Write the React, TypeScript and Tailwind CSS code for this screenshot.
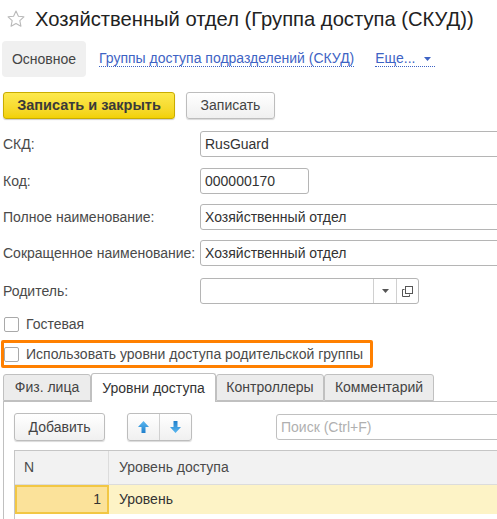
import React from 'react'

const font = { fontFamily: '"Liberation Sans", Arial, sans-serif' }

function Star() {
  return (
    <svg width="20" height="20" viewBox="0 0 24 24" className="shrink-0">
      <path
        d="M12 2.5l2.9 6.1 6.6.8-4.9 4.6 1.3 6.6L12 17.3l-5.9 3.3 1.3-6.6-4.9-4.6 6.6-.8z"
        fill="none"
        stroke="#b9b9b9"
        strokeWidth="1.3"
        strokeLinejoin="round"
      />
    </svg>
  )
}

function Arrow({ up }: { up?: boolean }) {
  return (
    <svg width="11" height="12" viewBox="0 0 11 12" className={up ? '' : 'rotate-180'}>
      <defs>
        <linearGradient id={up ? 'ga' : 'gb'} x1="0" y1="0" x2="0" y2="1">
          <stop offset="0" stopColor="#5cb8f0" />
          <stop offset="1" stopColor="#1f7fcc" />
        </linearGradient>
      </defs>
      <polygon points="5.5,0 11,6 7.5,6 7.5,12 3.5,12 3.5,6 0,6" fill={`url(#${up ? 'ga' : 'gb'})`} />
    </svg>
  )
}

function Tri({ color = '#555' }: { color?: string }) {
  return (
    <svg width="7" height="4" viewBox="0 0 7 4">
      <polygon points="0,0 7,0 3.5,4" fill={color} />
    </svg>
  )
}

function Field({ label, value, width, mt }: { label: string; value?: string; width: string; mt: string }) {
  return (
    <div className={`flex items-center h-[26px] ${mt}`}>
      <span className="w-[200px] pl-[3px] text-[14px] text-[#4a4a4a] shrink-0">{label}</span>
      <div className={`${width} h-full border border-[#b5b5b5] rounded-[3px] bg-white flex items-center px-[4px] text-[14px] text-[#333] shrink-0`}>
        {value}
      </div>
    </div>
  )
}

function Checkbox() {
  return <span className="w-[15px] h-[15px] border border-[#a9a9a9] rounded-[2px] bg-white shrink-0" />
}

function Tab({ label, active, w }: { label: string; active?: boolean; w: string }) {
  return active ? (
    <div className={`${w} h-[29px] -mb-px border border-[#c0c0c0] border-b-0 rounded-t-[3px] bg-white flex items-center justify-center text-[14px] text-[#333] z-10`}>
      {label}
    </div>
  ) : (
    <div className={`${w} h-[27px] border border-[#c0c0c0] rounded-t-[3px] bg-[#ececec] flex items-center justify-center text-[14px] text-[#444]`}>
      {label}
    </div>
  )
}

export default function App() {
  return (
    <div className="w-[497px] h-[519px] overflow-hidden bg-white" style={font}>
      {/* title */}
      <div className="flex items-center h-[38px] pl-[6px] gap-[9px]">
        <Star />
        <span className="text-[20.2px] text-[#222] leading-none pt-[1px]">Хозяйственный отдел (Группа доступа (СКУД))</span>
      </div>

      {/* nav */}
      <div className="flex items-center h-[36px] mt-[3px] pl-[2px] text-[14px]">
        <div className="h-full w-[84px] rounded-[4px] bg-[#f0f0f0] flex items-center justify-center text-[#444]">Основное</div>
        <span className="ml-[13px] text-[#3e63c4] border-b border-dotted border-[#3e63c4] leading-[15px]">
          Группы доступа подразделений (СКУД)
        </span>
        <span className="ml-[21px] flex items-center gap-[9px] pr-[4px] text-[#3e63c4] border-b border-dotted border-[#3e63c4] leading-[15px]">
          Еще...
          <Tri color="#3e63c4" />
        </span>
      </div>

      {/* buttons */}
      <div className="flex items-center mt-[15px] pl-[3px] gap-[11px] h-[27px]">
        <button className="h-full w-[172px] rounded-[3px] border border-[#c9ac00] bg-gradient-to-b from-[#fde94c] to-[#f2d100] text-[14.5px] font-bold text-[#3a3a3a] shadow-[0_1px_1px_rgba(0,0,0,0.2)]">
          Записать и закрыть
        </button>
        <button className="h-full w-[89px] rounded-[3px] border border-[#bdbdbd] bg-gradient-to-b from-white to-[#f0f0f0] text-[14px] text-[#444] shadow-[0_1px_1px_rgba(0,0,0,0.15)]">
          Записать
        </button>
      </div>

      {/* fields */}
      <Field label="СКД:" value="RusGuard" width="w-[310px]" mt="mt-[12px]" />
      <Field label="Код:" value="000000170" width="w-[109px]" mt="mt-[11px]" />
      <Field label="Полное наименование:" value="Хозяйственный отдел" width="w-[310px]" mt="mt-[10px]" />
      <Field label="Сокращенное наименование:" value="Хозяйственный отдел" width="w-[310px]" mt="mt-[10px]" />
      <div className="flex items-center h-[26px] mt-[12px]">
        <span className="w-[200px] pl-[3px] text-[14px] text-[#4a4a4a] shrink-0">Родитель:</span>
        <div className="w-[219px] h-full border border-[#b5b5b5] rounded-[3px] bg-white flex shrink-0">
          <div className="flex-1" />
          <div className="w-[23px] border-l border-[#d0d0d0] flex items-center justify-center">
            <Tri color="#555" />
          </div>
          <div className="w-[22px] border-l border-[#d0d0d0] flex items-center justify-center">
            <svg width="11" height="11" viewBox="0 0 11 11">
              <rect x="3.5" y="0.5" width="7" height="7" fill="white" stroke="#555" />
              <path d="M2.5 3.5H0.5V10.5H7.5V8.5" fill="none" stroke="#555" />
            </svg>
          </div>
        </div>
      </div>

      {/* checkboxes */}
      <div className="flex items-center gap-[7px] pl-[4px] h-[16px] mt-[12px] text-[14px] text-[#4a4a4a]">
        <Checkbox />
        Гостевая
      </div>
      <div className="ml-[1px] mt-[8px] w-[372px] h-[28px] border-[3px] border-[#ff8000] rounded-[2px] flex items-center gap-[7px] pl-[0px] text-[14px] text-[#4a4a4a]">
        <Checkbox />
        Использовать уровни доступа родительской группы
      </div>

      {/* tabs */}
      <div className="mt-[5px] flex items-end pl-[3px]">
        <Tab label="Физ. лица" w="w-[88px]" />
        <Tab label="Уровни доступа" active w="w-[125px]" />
        <Tab label="Контроллеры" w="w-[108px]" />
        <Tab label="Комментарий" w="w-[110px]" />
      </div>
      <div className="ml-[3px] w-[520px] h-[200px] border border-[#c0c0c0] bg-white pl-[10px] pt-[11px]">
        <div className="flex items-center h-[28px]">
          <button className="h-full w-[91px] rounded-[3px] border border-[#bdbdbd] bg-gradient-to-b from-white to-[#f0f0f0] text-[14px] text-[#444] shadow-[0_1px_1px_rgba(0,0,0,0.15)]">
            Добавить
          </button>
          <div className="ml-[22px] h-full w-[65px] rounded-[3px] border border-[#bdbdbd] bg-gradient-to-b from-white to-[#f0f0f0] flex shadow-[0_1px_1px_rgba(0,0,0,0.15)]">
            <div className="flex-1 flex items-center justify-center border-r border-[#d0d0d0]">
              <Arrow up />
            </div>
            <div className="flex-1 flex items-center justify-center">
              <Arrow />
            </div>
          </div>
          <div className="ml-[84px] h-[26px] w-[240px] border border-[#c0c0c0] rounded-[3px] flex items-center px-[4px] text-[14px] text-[#b0b0b0]">
            Поиск (Ctrl+F)
          </div>
        </div>
        <div className="mt-[9px] border border-[#c6c6c6] w-[520px]">
          <div className="flex h-[34px] bg-[#f2f2f2] text-[14px] text-[#4a4a4a] border-b border-[#dcdcdc]">
            <div className="w-[94px] border-r border-[#dcdcdc] flex items-center pl-[9px]">N</div>
            <div className="flex-1 flex items-center pl-[10px]">Уровень доступа</div>
          </div>
          <div className="flex h-[29px] bg-[#fdf3c6] text-[14px] text-[#333]">
            <div className="w-[94px] border-2 border-[#f2c744] bg-[#fbe29a] flex items-center justify-end pr-[6px]">1</div>
            <div className="flex-1 flex items-center pl-[10px]">Уровень</div>
          </div>
          <div className="h-[40px] bg-white" />
        </div>
      </div>
    </div>
  )
}
